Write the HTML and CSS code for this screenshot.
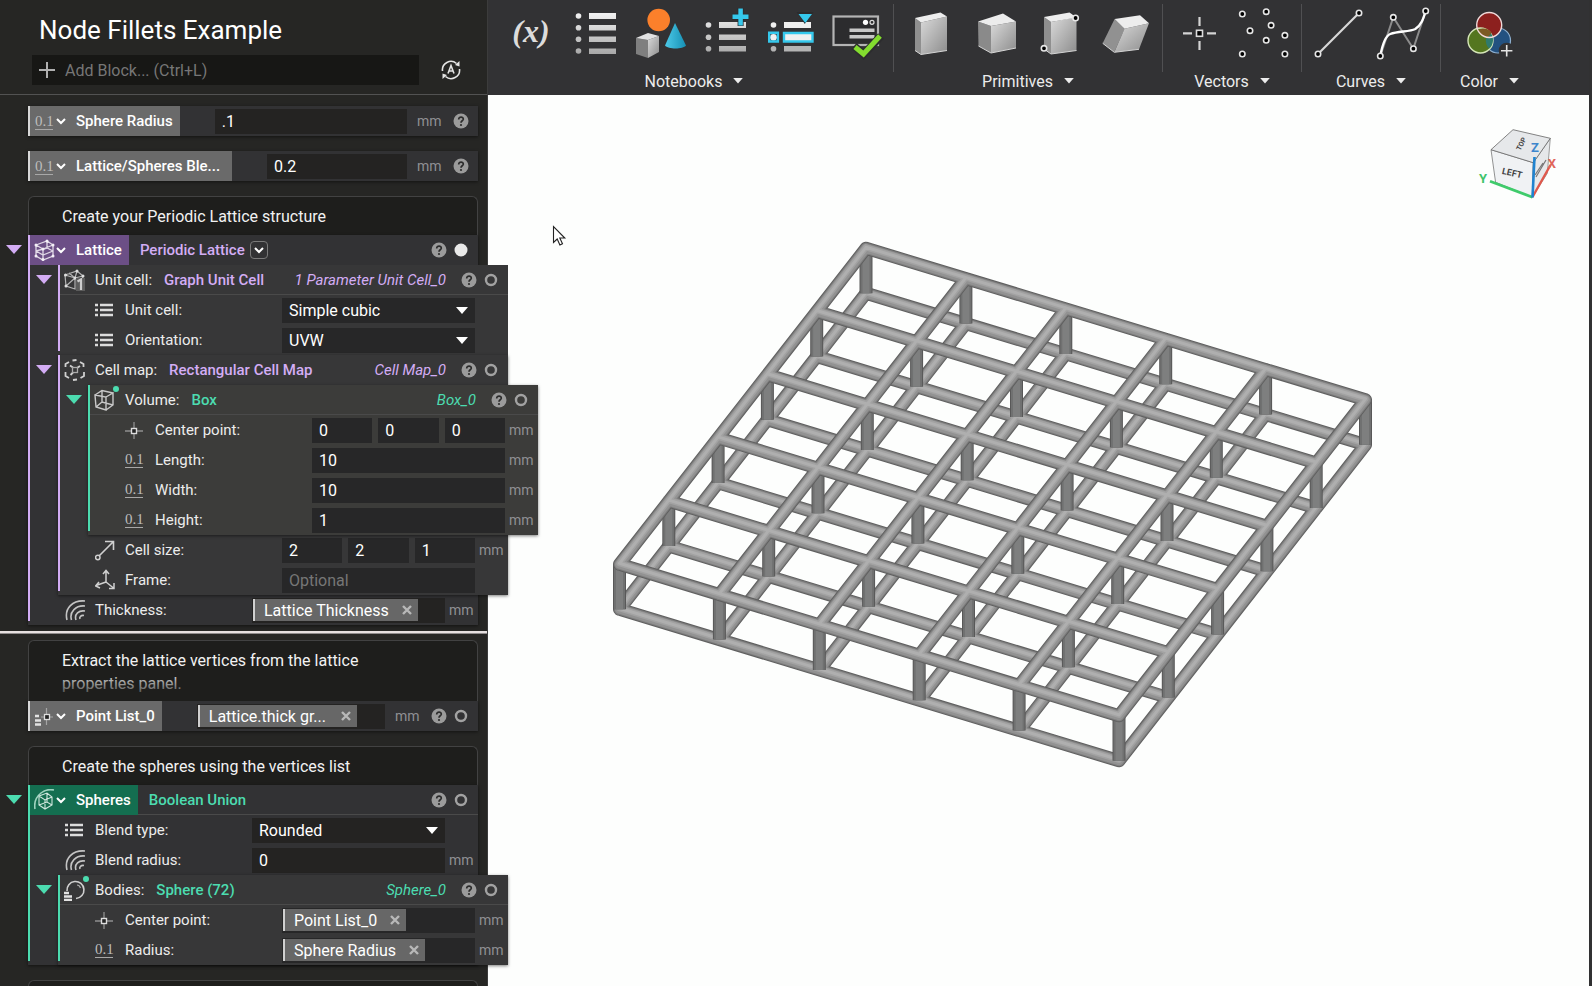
FILE: index.html
```html
<!DOCTYPE html>
<html lang="en">
<head>
    <meta charset="UTF-8">
    <meta name="viewport" content="width=device-width, initial-scale=1.0">
    <title>Node Fillets Example</title>
    <link rel="stylesheet" href="styles.css">
</head>
<body>
    <svg class="sprite" aria-hidden="true">
        <symbol id="chevron" viewBox="0 0 10 10"><path d="M1 3l4 4 4-4" fill="none" stroke="currentColor" stroke-width="2"/></symbol>
        <symbol id="down" viewBox="0 0 16 10"><path d="M0 0h16L8 9z" fill="currentColor"/></symbol>
        <symbol id="close" viewBox="0 0 10 10"><path d="M1 1l8 8M9 1L1 9" stroke="currentColor" stroke-width="2.4"/></symbol>
        <symbol id="help" viewBox="0 0 16 16">
            <circle cx="8" cy="8" r="7.5" fill="#9b9b9b"/>
            <path d="M5.7 6.4c0-3.2 4.8-3 4.6-.2C10.2 7.8 8 7.8 8 9.7" fill="none" stroke="#2c2c2c" stroke-width="1.7"/>
            <circle cx="8" cy="12" r="1.1" fill="#2c2c2c"/>
        </symbol>
        <symbol id="ring" viewBox="0 0 16 16"><circle cx="8" cy="8" r="5" fill="none" stroke="#a2a2a2" stroke-width="2.4"/></symbol>
        <symbol id="dot" viewBox="0 0 16 16"><circle cx="8" cy="8" r="6.5" fill="#e9e9e9"/></symbol>
        <symbol id="list" viewBox="0 0 22 22">
            <path d="M0 6h3m2 0h13M0 11h3m2 0h13M0 16h3m2 0h13" stroke="#dcdcdc" stroke-width="2.6"/>
        </symbol>
        <symbol id="point" viewBox="0 0 22 22">
            <path d="M0 12h6m6 0h6M9 3v6m0 6v5" stroke="#8f8f8f" stroke-width="1.3"/>
            <rect x="6.5" y="9.5" width="5" height="5" fill="#222" stroke="#ddd" stroke-width="1.4"/>
        </symbol>
        <symbol id="pointlist" viewBox="0 0 22 22">
            <path d="M7 12h3m5 0h4M12.500 3v6m0 6v5" stroke="#a5a5a5" stroke-width="1.2"/>
            <rect x="10.5" y="9.5" width="5" height="5" fill="#222" stroke="#ddd" stroke-width="1.3"/>
            <path d="M1 11h4M1 15.500h6M1 19.500h6" stroke="#e2e2e2" stroke-width="2.4"/>
        </symbol>
        <symbol id="offset" viewBox="0 0 22 22">
            <path d="M2 21C-1 9 8 1 20 2M6.500 21C4 13 11 6 20 7M11 21c-2-6 3-10 9-9" fill="none" stroke="#c4c4c4" stroke-width="1.6"/>
            <path d="M15 20c-1-2 1-4 4-3.500" fill="none" stroke="#c4c4c4" stroke-width="1.6"/>
        </symbol>
        <symbol id="arrow" viewBox="0 0 22 22">
            <path d="M4 17L18 3M10 2.500h8.500V11" fill="none" stroke="#d0d0d0" stroke-width="1.6"/>
            <circle cx="2.8" cy="18.5" r="2.2" fill="none" stroke="#d0d0d0" stroke-width="1.5"/>
        </symbol>
        <symbol id="frame" viewBox="0 0 22 22">
            <path d="M11 13V2M8 5l3-3.500L14 5M11 13L1 16.500M4 13l-3.500 4L5 19M11 13l7.500 6M19 14v5.500h-5" fill="none" stroke="#d0d0d0" stroke-width="1.5"/>
        </symbol>
        <symbol id="box" viewBox="0 0 22 22">
            <path d="M1 6l11 2v13L2 18zM12 8l7-4v12l-7 5M1 6l7-4.500L19 4M8 2v11M2 18l6-5 11 3" fill="none" stroke="#c8c8c8" stroke-width="1.4"/>
        </symbol>
        <symbol id="graphcell" viewBox="0 0 22 22">
            <path d="M1 6L13 2l6 5M1 6l10 3 8-2M1 6l1 11 9 3V9M2 17l9-8M5 4l6 5M11 9l2-7M19 7l-1 5" fill="none" stroke="#b4b4b4" stroke-width="1.2"/>
            <g fill="#ddd"><circle cx="1.5" cy="6" r="1.5"/><circle cx="13" cy="2" r="1.5"/><circle cx="11" cy="9" r="1.5"/><circle cx="2" cy="17" r="1.5"/><circle cx="19" cy="7" r="1.5"/></g>
            <path d="M12 9h9v13h-9z" fill="#5c5c5c"/><path d="M13.500 12.500l3.500-2V21" fill="none" stroke="#ccc" stroke-width="2.2"/>
        </symbol>
        <symbol id="cellmap" viewBox="0 0 22 22">
            <path d="M1.500 8V5L5 3M8.500 1.500l4-.5M16 3l3.500 2v3M20 13v4l-3.500 2M13 20.500l-4 .5M5 19l-3.500-2v-4M9 8.500l-3-2M13 9l3-2M9 13.500L6.500 16" fill="none" stroke="#d0d0d0" stroke-width="1.8"/>
            <rect x="8.5" y="8.500" width="5" height="5" fill="none" stroke="#aaa" stroke-width="1.3"/>
        </symbol>
        <symbol id="latticeicon" viewBox="0 0 22 22">
            <path d="M2 6l11-4 6 4v11l-10 4-7-4zM2 6l7 4 10-4M9 10v11M2 12l7 4 10-4M2 12l11-3 6 3M13 2v7" fill="none" stroke="#e0d8e6" stroke-width="1.3"/>
            <g fill="#f4f0f7"><circle cx="2" cy="6" r="1.5"/><circle cx="13" cy="2" r="1.5"/><circle cx="19" cy="6" r="1.5"/><circle cx="9" cy="10" r="1.5"/><circle cx="9" cy="20.5" r="1.5"/><circle cx="2" cy="17" r="1.5"/><circle cx="19" cy="17" r="1.5"/></g>
        </symbol>
        <symbol id="union" viewBox="0 0 22 22">
            <path d="M1 20C0 14 2 8 7 4c3-2.500 8-4 13-3" fill="none" stroke="#9fd3bf" stroke-width="1.6"/>
            <path d="M5 7l8-3 5 4v8l-7 4-6-4zM5 7l6 4 7-3M11 11v9M5 16l8-3 5 3M13 4v9" fill="none" stroke="#cfe6dd" stroke-width="1.1"/>
        </symbol>
        <symbol id="sphere" viewBox="0 0 22 22">
            <path d="M3 12A8.500 8.500 0 1 1 12 19.500" fill="none" stroke="#d0d0d0" stroke-width="1.6"/>
            <path d="M13 6c2 0 3 1.500 3.500 3" fill="none" stroke="#aaa" stroke-width="1.2"/>
            <path d="M0 14h5M0 17.500h8M0 21h8" stroke="#e2e2e2" stroke-width="2.3"/>
        </symbol>
        <linearGradient id="side" x1="0" x2="1" y1="0" y2="1"><stop offset="0" stop-color="#dadada"/><stop offset="1" stop-color="#8c8c8c"/></linearGradient>
        <linearGradient id="cone" x1="0" x2="1"><stop offset="0" stop-color="#4cc9e8"/><stop offset="1" stop-color="#1690b4"/></linearGradient>
        <linearGradient id="greys" gradientUnits="userSpaceOnUse" x1="0" y1="14" x2="0" y2="54"><stop offset="0" stop-color="#f0f0f0"/><stop offset="1" stop-color="#a8a8a8"/></linearGradient>
    </svg>

    <div class="app">
        <aside class="sidebar">
            <header class="notebook-head">
                <h1>Node Fillets Example</h1>
                <div class="add-row">
                    <label class="add-block">
                        <svg width="16" height="16" viewBox="0 0 16 16"><path d="M8 0v16M0 8h16" stroke="#b0b0b0" stroke-width="2"/></svg>
                        <input type="text" placeholder="Add Block... (Ctrl+L)" aria-label="Add Block">
                    </label>
                    <button class="icon-btn" aria-label="Auto run">
                        <svg width="20" height="20" viewBox="0 0 20 20" fill="none" stroke="#e4e4e4" stroke-width="1.6">
                            <path d="M1.500 11A8.500 8.500 0 0 1 15.500 3.500M18.500 9A8.500 8.500 0 0 1 4.500 16.500M7 13.500l3-8 3 8M8 11h4"/>
                            <path d="M14 5l4.500-4v5.500zM6 15l-4.500 4v-5.500z" fill="#e4e4e4" stroke="none"/>
                        </svg>
                    </button>
                </div>
            </header>

            <section class="pane">
                <div class="node plain">
                    <div class="head">
                        <span class="tag"><span class="num">0.1</span><svg class="chev"><use href="#chevron"/></svg><label for="sphere-radius">Sphere Radius</label></span>
                        <input class="field value" id="sphere-radius" type="text" value=".1">
                        <span class="unit">mm</span>
                        <button class="icon-btn" aria-label="Help"><svg class="ic16"><use href="#help"/></svg></button>
                    </div>
                </div>
                <div class="node plain">
                    <div class="head">
                        <span class="tag tag-long"><span class="num">0.1</span><svg class="chev"><use href="#chevron"/></svg><label for="blend">Lattice/Spheres Ble...</label></span>
                        <input class="field value" id="blend" type="text" value="0.2">
                        <span class="unit">mm</span>
                        <button class="icon-btn" aria-label="Help"><svg class="ic16"><use href="#help"/></svg></button>
                    </div>
                </div>

                <article class="block">
                    <p class="comment">Create your Periodic Lattice structure</p>
                    <div class="node purple">
                        <div class="head">
                            <button class="fold" aria-label="Collapse"><svg width="16" height="10"><use href="#down"/></svg></button>
                            <span class="tag"><svg class="ic"><use href="#latticeicon"/></svg><svg class="chev"><use href="#chevron"/></svg><span class="tag-name">Lattice</span></span>
                            <span class="type">Periodic Lattice</span>
                            <button class="overload" aria-label="Overloads"><svg class="chev"><use href="#chevron"/></svg></button>
                            <span class="ports">
                                <button class="icon-btn" aria-label="Help"><svg class="ic16"><use href="#help"/></svg></button>
                                <button class="icon-btn" aria-label="Visible"><svg class="ic16"><use href="#dot"/></svg></button>
                            </span>
                        </div>

                        <div class="node child">
                            <div class="head ruled">
                                <button class="fold" aria-label="Collapse"><svg width="16" height="10"><use href="#down"/></svg></button>
                                <svg class="ic"><use href="#graphcell"/></svg>
                                <span class="label">Unit cell:</span>
                                <span class="type">Graph Unit Cell</span>
                                <em class="instance">1 Parameter Unit Cell_0</em>
                                <span class="ports">
                                    <button class="icon-btn" aria-label="Help"><svg class="ic16"><use href="#help"/></svg></button>
                                    <button class="icon-btn" aria-label="Visible"><svg class="ic16"><use href="#ring"/></svg></button>
                                </span>
                            </div>
                            <div class="row">
                                <svg class="ic"><use href="#list"/></svg>
                                <label for="cell-type">Unit cell:</label>
                                <span class="select"><select class="field" id="cell-type"><option>Simple cubic</option></select></span>
                                <span class="unit"></span>
                            </div>
                            <div class="row">
                                <svg class="ic"><use href="#list"/></svg>
                                <label for="orient">Orientation:</label>
                                <span class="select"><select class="field" id="orient"><option>UVW</option></select></span>
                                <span class="unit"></span>
                            </div>
                        </div>

                        <div class="node child last">
                            <div class="head">
                                <button class="fold" aria-label="Collapse"><svg width="16" height="10"><use href="#down"/></svg></button>
                                <svg class="ic"><use href="#cellmap"/></svg>
                                <span class="label">Cell map:</span>
                                <span class="type">Rectangular Cell Map</span>
                                <em class="instance">Cell Map_0</em>
                                <span class="ports">
                                    <button class="icon-btn" aria-label="Help"><svg class="ic16"><use href="#help"/></svg></button>
                                    <button class="icon-btn" aria-label="Visible"><svg class="ic16"><use href="#ring"/></svg></button>
                                </span>
                            </div>

                            <div class="node child deep last green">
                                <div class="head ruled">
                                    <button class="fold" aria-label="Collapse"><svg width="16" height="10"><use href="#down"/></svg></button>
                                    <svg class="ic"><use href="#box"/></svg>
                                    <span class="badge"></span>
                                    <span class="label">Volume:</span>
                                    <span class="type">Box</span>
                                    <em class="instance">Box_0</em>
                                    <span class="ports">
                                        <button class="icon-btn" aria-label="Help"><svg class="ic16"><use href="#help"/></svg></button>
                                        <button class="icon-btn" aria-label="Visible"><svg class="ic16"><use href="#ring"/></svg></button>
                                    </span>
                                </div>
                                <div class="row">
                                    <svg class="ic"><use href="#point"/></svg>
                                    <label for="cx">Center point:</label>
                                    <span class="triple">
                                        <input class="field" id="cx" type="text" value="0">
                                        <input class="field" type="text" value="0" aria-label="Center point Y">
                                        <input class="field" type="text" value="0" aria-label="Center point Z">
                                    </span>
                                    <span class="unit">mm</span>
                                </div>
                                <div class="row">
                                    <span class="ic"><span class="num">0.1</span></span>
                                    <label for="len">Length:</label>
                                    <input class="field" id="len" type="text" value="10">
                                    <span class="unit">mm</span>
                                </div>
                                <div class="row">
                                    <span class="ic"><span class="num">0.1</span></span>
                                    <label for="wid">Width:</label>
                                    <input class="field" id="wid" type="text" value="10">
                                    <span class="unit">mm</span>
                                </div>
                                <div class="row">
                                    <span class="ic"><span class="num">0.1</span></span>
                                    <label for="hei">Height:</label>
                                    <input class="field" id="hei" type="text" value="1">
                                    <span class="unit">mm</span>
                                </div>
                            </div>

                            <div class="row">
                                <svg class="ic"><use href="#arrow"/></svg>
                                <label for="sx">Cell size:</label>
                                <span class="triple">
                                    <input class="field" id="sx" type="text" value="2">
                                    <input class="field" type="text" value="2" aria-label="Cell size Y">
                                    <input class="field" type="text" value="1" aria-label="Cell size Z">
                                </span>
                                <span class="unit">mm</span>
                            </div>
                            <div class="row">
                                <svg class="ic"><use href="#frame"/></svg>
                                <label for="frame-in">Frame:</label>
                                <input class="field" id="frame-in" type="text" placeholder="Optional">
                                <span class="unit"></span>
                            </div>
                        </div>

                        <div class="row">
                            <svg class="ic"><use href="#offset"/></svg>
                            <label for="thick">Thickness:</label>
                            <div class="field slot">
                                <span class="token">Lattice Thickness<button class="icon-btn" aria-label="Remove"><svg width="10" height="10"><use href="#close"/></svg></button></span>
                                <input id="thick" type="text">
                            </div>
                            <span class="unit">mm</span>
                        </div>
                    </div>
                </article>
            </section>

            <div class="splitter"></div>

            <section class="pane lower">
                <article class="block">
                    <p class="comment tall">Extract the lattice vertices from the lattice properties panel.</p>
                    <div class="node plain">
                        <div class="head">
                            <span class="tag"><svg class="ic"><use href="#pointlist"/></svg><svg class="chev"><use href="#chevron"/></svg><label for="points">Point List_0</label></span>
                            <div class="field slot value">
                                <span class="token token-long">Lattice.thick gr...<button class="icon-btn" aria-label="Remove"><svg width="10" height="10"><use href="#close"/></svg></button></span>
                                <input id="points" type="text">
                            </div>
                            <span class="unit">mm</span>
                            <span class="ports">
                                <button class="icon-btn" aria-label="Help"><svg class="ic16"><use href="#help"/></svg></button>
                                <button class="icon-btn" aria-label="Visible"><svg class="ic16"><use href="#ring"/></svg></button>
                            </span>
                        </div>
                    </div>
                </article>

                <article class="block">
                    <p class="comment">Create the spheres using the vertices list</p>
                    <div class="node green">
                        <div class="head ruled">
                            <button class="fold" aria-label="Collapse"><svg width="16" height="10"><use href="#down"/></svg></button>
                            <span class="tag"><svg class="ic"><use href="#union"/></svg><svg class="chev"><use href="#chevron"/></svg><span class="tag-name">Spheres</span></span>
                            <span class="type">Boolean Union</span>
                            <span class="ports">
                                <button class="icon-btn" aria-label="Help"><svg class="ic16"><use href="#help"/></svg></button>
                                <button class="icon-btn" aria-label="Visible"><svg class="ic16"><use href="#ring"/></svg></button>
                            </span>
                        </div>
                        <div class="row">
                            <svg class="ic"><use href="#list"/></svg>
                            <label for="blend-type">Blend type:</label>
                            <span class="select"><select class="field" id="blend-type"><option>Rounded</option></select></span>
                            <span class="unit"></span>
                        </div>
                        <div class="row">
                            <svg class="ic"><use href="#offset"/></svg>
                            <label for="blend-radius">Blend radius:</label>
                            <input class="field" id="blend-radius" type="text" value="0">
                            <span class="unit">mm</span>
                        </div>
                        <div class="node child last">
                            <div class="head ruled">
                                <button class="fold" aria-label="Collapse"><svg width="16" height="10"><use href="#down"/></svg></button>
                                <svg class="ic"><use href="#sphere"/></svg>
                                <span class="badge"></span>
                                <span class="label">Bodies:</span>
                                <span class="type">Sphere (72)</span>
                                <em class="instance">Sphere_0</em>
                                <span class="ports">
                                    <button class="icon-btn" aria-label="Help"><svg class="ic16"><use href="#help"/></svg></button>
                                    <button class="icon-btn" aria-label="Visible"><svg class="ic16"><use href="#ring"/></svg></button>
                                </span>
                            </div>
                            <div class="row">
                                <svg class="ic"><use href="#point"/></svg>
                                <label for="body-center">Center point:</label>
                                <div class="field slot">
                                    <span class="token">Point List_0<button class="icon-btn" aria-label="Remove"><svg width="10" height="10"><use href="#close"/></svg></button></span>
                                    <input id="body-center" type="text">
                                </div>
                                <span class="unit">mm</span>
                            </div>
                            <div class="row">
                                <span class="ic"><span class="num">0.1</span></span>
                                <label for="body-radius">Radius:</label>
                                <div class="field slot">
                                    <span class="token">Sphere Radius<button class="icon-btn" aria-label="Remove"><svg width="10" height="10"><use href="#close"/></svg></button></span>
                                    <input id="body-radius" type="text">
                                </div>
                                <span class="unit">mm</span>
                            </div>
                        </div>
                    </div>
                </article>

                <article class="block">
                    <p class="comment"></p>
                </article>
            </section>
        </aside>

        <main class="workspace">
            <nav class="toolbar">
                <div class="group wide">
                    <div class="tools">
                        <button aria-label="Variable"><svg class="tool" viewBox="0 0 65 66"><text class="fx" x="32" y="42" text-anchor="middle">(x)</text></svg></button>
                        <button aria-label="List"><svg class="tool" viewBox="0 0 65 66">
                            <g fill="url(#greys)"><circle cx="14.500" cy="16" r="2.8"/><circle cx="14.500" cy="27.700" r="2.8"/><circle cx="14.500" cy="39.300" r="2.8"/><circle cx="14.500" cy="51" r="2.8"/>
                            <path d="M25 13h27v6H25zM25 25h27v5.500H25zM25 36.500h27V42H25zM25 48.500h27V54H25z"/></g>
                        </svg></button>
                        <button aria-label="Blocks"><svg class="tool" viewBox="0 0 65 66">
                            <circle cx="29.700" cy="20" r="11.300" fill="#fb802b"/>
                            <path d="M46 23l11 22.500c-3 4-18 4-21 0z" fill="url(#cone)"/>
                            <path d="M7 38l12 2v18L7 54z" fill="#7f7f7f"/><path d="M19 40l11-4v16l-11 6z" fill="url(#side)"/><path d="M7 38l12-5 11 3-11 4z" fill="#e2e2e2"/>
                        </svg></button>
                        <button aria-label="Add to list"><svg class="tool" viewBox="0 0 65 66">
                            <g fill="url(#greys)"><circle cx="14.500" cy="25" r="2.8"/><circle cx="14.500" cy="37.300" r="2.8"/><circle cx="14.500" cy="48.700" r="2.8"/>
                            <path d="M25 22h27v6H25zM25 34.500h27V40H25zM25 46h27v5.500H25z"/></g>
                            <path d="M46.600 8v18M38 16.700h17" stroke="#2b2b2d" stroke-width="6"/>
                            <path d="M46.600 8.500v17M38.500 16.700h16" stroke="#35c8ec" stroke-width="4.5"/>
                        </svg></button>
                        <button aria-label="Filter list"><svg class="tool" viewBox="0 0 65 66">
                            <g fill="#f0f0f0"><circle cx="14.500" cy="25" r="2.8"/><circle cx="14.500" cy="37.300" r="3.4"/>
                            <path d="M25 22h27v6H25zM25 33.500h28v7.500H25z"/></g>
                            <g fill="#b4b4b4"><circle cx="14.500" cy="48.700" r="2.8"/><path d="M25 46h27v5.500H25z"/></g>
                            <path d="M10.200 32.800h8.700v8.700h-8.700zM25 33h28.500v8.500H25z" fill="none" stroke="#35c8ec" stroke-width="2.4"/>
                            <path d="M37.500 12h17l-8.700 12z" fill="#2b2b2d"/>
                            <path d="M39.500 14h13.500l-6.700 9z" fill="#35c8ec"/>
                        </svg></button>
                        <button aria-label="Custom block"><svg class="tool" viewBox="0 0 65 66">
                            <rect x="9.500" y="16.500" width="44.500" height="28.500" fill="#2c2c2e" stroke="#b4b4b4" stroke-width="2.2"/>
                            <circle cx="41.500" cy="22.300" r="2.6" fill="#fff"/><circle cx="48" cy="22.300" r="2" fill="none" stroke="#ddd" stroke-width="1.2"/>
                            <path d="M25.500 30.300h25M25.500 36.700h25" stroke="#c8c8c8" stroke-width="3.4"/>
                            <path d="M30 46l9.500 8.500L57 36" fill="none" stroke="#2c2c2e" stroke-width="8"/>
                            <path d="M31 47l8.500 7L56 36" fill="none" stroke="#83dc2f" stroke-width="5"/>
                        </svg></button>
                    </div>
                    <button class="group-name">Notebooks<svg width="10" height="6"><use href="#down"/></svg></button>
                </div>
                <div class="group">
                    <div class="tools">
                        <button aria-label="Box"><svg class="tool" viewBox="0 0 65 66">
                            <path d="M17 18l6 4.500v32l-6-4z" fill="#8f8f8f"/><path d="M23 22.500l26-6v34l-26 4z" fill="url(#side)"/><path d="M17 18l25.500-5.500 6.500 4-26 6z" fill="#ededed"/><path d="M17 50.500l6 4 26-4" fill="none" stroke="#d4d4d4"/>
                        </svg></button>
                        <button aria-label="Cube"><svg class="tool" viewBox="0 0 65 66">
                            <path d="M15 21.500l13 4.500v27l-12.500-7z" fill="#8a8a8a"/><path d="M28 26l25-4.500v26.500L28 53z" fill="url(#side)"/><path d="M15 21.500l25-8 13 8L28 26z" fill="#ececec"/><path d="M15.500 46L28 53l25-5" fill="none" stroke="#d4d4d4"/>
                        </svg></button>
                        <button aria-label="Box from corners"><svg class="tool" viewBox="0 0 65 66">
                            <path d="M16 17l7 5v32l-7-5z" fill="#8f8f8f"/><path d="M23 22l25.500-5v33.500L23 54z" fill="url(#side)"/><path d="M16 17l25.500-4.500 7 5L23 22z" fill="#ededed"/><path d="M16 49l7 5 25.500-3.500" fill="none" stroke="#d4d4d4"/>
                            <g class="pts"><circle cx="47.600" cy="18" r="2.7"/><circle cx="16" cy="48.300" r="2.7"/></g>
                        </svg></button>
                        <button aria-label="Parallelepiped"><svg class="tool" viewBox="0 0 65 66">
                            <path d="M21.600 19l10 9.700L21.300 52.300 9.700 43.300z" fill="#919191"/><path d="M31.500 28.700L56 23.300l-10 26-24.700 3z" fill="url(#side)"/><path d="M21.600 19L47 15.300l9 8-24.500 5.400z" fill="#ededed"/><path d="M9.700 43.300l11.600 9 24.700-3" fill="none" stroke="#d4d4d4"/>
                        </svg></button>
                    </div>
                    <button class="group-name">Primitives<svg width="10" height="6"><use href="#down"/></svg></button>
                </div>
                <div class="group">
                    <div class="tools">
                        <button aria-label="Point"><svg class="tool" viewBox="0 0 65 66">
                            <path d="M16 33.300h9m15 0h9M32.500 17v9m0 15v9" stroke="#d4d4d4" stroke-width="2.2"/><rect x="29.500" y="30.300" width="6" height="6" fill="#000" stroke="#ddd" stroke-width="1.6"/>
                        </svg></button>
                        <button aria-label="Points"><svg class="tool" viewBox="0 0 65 66"><g class="pts">
                            <circle cx="10.300" cy="14" r="2.7"/><circle cx="34.200" cy="11.700" r="2.7"/><circle cx="39.100" cy="25.300" r="2.7"/><circle cx="18" cy="30.700" r="2.7"/><circle cx="52.900" cy="35.300" r="2.7"/><circle cx="34.200" cy="40.300" r="2.7"/><circle cx="10.300" cy="54" r="2.7"/><circle cx="52.900" cy="54" r="2.7"/>
                        </g></svg></button>
                    </div>
                    <button class="group-name">Vectors<svg width="10" height="6"><use href="#down"/></svg></button>
                </div>
                <div class="group">
                    <div class="tools">
                        <button aria-label="Line"><svg class="tool" viewBox="0 0 65 66">
                            <path d="M12 54l41-41" stroke="#d8d8d8" stroke-width="2.2"/><g class="pts"><circle cx="12" cy="54" r="2.7"/><circle cx="53" cy="13" r="2.7"/></g>
                        </svg></button>
                        <button aria-label="Spline"><svg class="tool" viewBox="0 0 65 66">
                            <path d="M9.300 56l13-38.700 20 31.400L54.700 11" fill="none" stroke="#8c8c8c" stroke-width="2"/>
                            <path d="M9.300 56c2-11 5-20 10-22 8-3 19-2 25-5 6-4 8-10 10.400-18" fill="none" stroke="#fff" stroke-width="2.4"/>
                            <g class="pts"><circle cx="9.300" cy="56" r="2.7"/><circle cx="22.300" cy="17.300" r="2.7"/><circle cx="42.400" cy="48.700" r="2.7"/><circle cx="54.700" cy="11" r="2.7"/></g>
                        </svg></button>
                    </div>
                    <button class="group-name">Curves<svg width="10" height="6"><use href="#down"/></svg></button>
                </div>
                <div class="group color">
                    <div class="tools">
                        <button aria-label="Color"><svg class="tool" viewBox="0 0 65 66">
                            <circle cx="41" cy="40.500" r="12.500" fill="#235180" stroke="#8eb0d0" stroke-width="1.2"/>
                            <circle cx="32.200" cy="25" r="12.500" fill="#8c201e"/>
                            <circle cx="23.500" cy="40.500" r="12.500" fill="#54761f" stroke="#d5e6b8" stroke-width="1.4"/>
                            <path d="M32.200 31.500c3 2.500 4 6 3.800 9-.3 4-2 6.500-3.800 8-3-2.500-4-7-3-11 .5-2.500 1.500-4.500 3-6z" fill="#2f7a6d"/>
                            <path d="M21 30.500c4-3 10-2.500 13.500 2-1.500 2.500-2.500 4.800-5.500 5-3.500 0-6.500-3-8-7z" fill="#7c5a23"/>
                            <circle cx="32.200" cy="25" r="12.500" fill="none" stroke="#f0dada" stroke-width="1.4"/>
                            <circle cx="49.700" cy="50.700" r="8" fill="#323234"/>
                            <path d="M49.700 45v11.400M44 50.700h11.400" stroke="#e4e4e4" stroke-width="1.6"/>
                        </svg></button>
                    </div>
                    <button class="group-name">Color<svg width="10" height="6"><use href="#down"/></svg></button>
                </div>
            </nav>

            <div class="viewport">
                <svg class="scene" viewBox="0 0 1101 891" preserveAspectRatio="xMinYMin meet">
                    <defs>
                        <!-- one deck: 6 x 6 rails -->
                        <path id="deck" d="M378 153.300l499.500 151.500M328.700 216.500l499.500 151.500M279.400 279.700l499.500 151.500M230.100 342.900l499.500 151.500M180.800 406.100l499.500 151.500M131.500 469.300l499.500 151.500M378 153.300l-246.500 316M477.900 183.600l-246.500 316M577.800 213.900l-246.500 316M677.700 244.200l-246.500 316M777.600 274.500l-246.500 316M877.500 304.800l-246.500 316"/>
                        <path id="posts-row" d="M0 0v45M99.900 30.300v45M199.800 60.600v45M299.700 90.900v45M399.600 121.200v45M499.500 151.500v45"/>
                        <g id="posts">
                            <use href="#posts-row" x="378" y="153.300"/>
                            <use href="#posts-row" x="328.700" y="216.500"/>
                            <use href="#posts-row" x="279.400" y="279.700"/>
                            <use href="#posts-row" x="230.100" y="342.900"/>
                            <use href="#posts-row" x="180.800" y="406.100"/>
                            <use href="#posts-row" x="131.500" y="469.300"/>
                        </g>
                        <g id="shaded-deck">
                            <use href="#deck" class="t1"/>
                            <use href="#deck" class="t2"/>
                            <use href="#deck" class="t3"/>
                            <use href="#deck" class="t4" y="-1"/>
                            <use href="#deck" class="t5" y="-1"/>
                        </g>
                    </defs>
                    <use href="#shaded-deck" y="45"/>
                    <g class="posts">
                        <use href="#posts" class="p1"/>
                        <use href="#posts" class="p2"/>
                        <use href="#posts" class="p3"/>
                    </g>
                    <use href="#shaded-deck"/>
                    <path d="M65.500 131.500v16l3.700-3.500 2.700 6 2.600-1.200-2.700-5.800h5z" fill="#fff" stroke="#222" stroke-width="1.1"/>
                </svg>
                <svg class="viewcube" width="90" height="90" viewBox="0 0 90 90">
                    <path d="M14 34.700l42.300 13-1 34.600L18.600 67.300z" fill="#f0f2f4" stroke="#777" stroke-width=".8"/>
                    <path d="M56.300 47.700l17-24.400-3 35-15 24z" fill="#e6e8ea" stroke="#888" stroke-width=".8"/>
                    <path d="M36 14.700l37.300 8.600-17 24.400-42.300-13z" fill="#e6e8ea" stroke="#666" stroke-width=".8"/>
                    <path d="M59 62l10-17M58 60l8-12" stroke="#777" stroke-width="1.2"/>
                    <text class="face" text-anchor="middle" transform="translate(34.500 61) rotate(13)">LEFT</text>
                    <text class="face top" text-anchor="middle" transform="translate(46.500 30) rotate(-62)">TOP</text>
                    <path d="M13 66.300l42.500 16" stroke="#3fcb6b" stroke-width="2.8"/>
                    <path d="M55.500 82l18-32" stroke="#e0584c" stroke-width="2.4"/>
                    <path d="M55.500 82.500L57.500 42" stroke="#1f83d0" stroke-width="2.6"/>
                    <g class="axis" text-anchor="middle"><text x="6" y="68" fill="#3fc46b">Y</text><text x="58" y="37" fill="#3d86cc">Z</text><text x="75" y="53" fill="#e0655a">X</text></g>
                </svg>
            </div>
        </main>
    </div>
</body>
</html>
```
FILE: styles.css
```css
*{
    margin: 0;
    padding: 0;
    box-sizing: border-box;
}
body{
    font-family: Roboto, "Liberation Sans", sans-serif;
    font-size: 15px;
    color: #ececec;
    background-color: #262624;
}
button, input, select{
    font: inherit;
    color: inherit;
    background: none;
    border: 0;
    outline: 0;
}
svg{
    display: block;
    flex-shrink: 0;
}
.sprite{
    position: absolute;
    width: 0;
    height: 0;
}
.app{
    display: flex;
    height: 100vh;
    overflow: hidden;
}

/* sidebar */
.sidebar{
    flex: 0 0 488px;
    min-width: 0;
    position: relative;
    z-index: 1;
    background-color: #262624;
    border-right: 1px solid #3c3c3c;
}
.notebook-head{
    padding: 15px 26px 9px 32px;
    border-bottom: 1px solid #525252;
}
h1{
    padding-left: 7px;
    font-size: 26px;
    font-weight: 400;
    line-height: 30px;
    color: #fff;
}
.add-row{
    display: flex;
    align-items: center;
    gap: 22px;
    margin-top: 10px;
}
.add-block{
    flex: 1;
    display: flex;
    align-items: center;
    gap: 10px;
    height: 30px;
    padding-left: 7px;
    background-color: #171715;
}
.add-block input{
    flex: 1;
    min-width: 0;
    font-size: 16px;
}
::placeholder{
    color: #767676;
    opacity: 1;
}
.icon-btn{
    display: block;
    flex-shrink: 0;
}
.ic16{
    width: 16px;
    height: 16px;
}
.pane{
    display: flex;
    flex-direction: column;
    gap: 15px;
    padding: 11px 9px 6px 28px;
}
.lower{
    padding-top: 6px;
}
.splitter{
    height: 3px;
    background-color: #908c8c;
    border-top: 2px solid #e6e0e0;
}
.comment{
    min-height: 39px;
    padding: 8px 60px 0 33px;
    font-size: 16px;
    line-height: 23px;
    color: #f2f2f2;
    background-color: #1e1e1c;
    border: 1px solid #424242;
    border-bottom: 0;
    border-radius: 6px 6px 0 0;
}
/* second line fades out */
.tall{
    position: relative;
    height: 61px;
}
.tall::after{
    content: "";
    position: absolute;
    left: 0;
    right: 0;
    bottom: 0;
    height: 30px;
    background: linear-gradient(rgba(30, 30, 28, 0), #1e1e1c);
}

/* nodes */
.node{
    --accent: #d8d8d8;
    --tag: #6a6a6a;
    --field: #242322;
    padding-left: 2px;
    background: linear-gradient(var(--accent), var(--accent)) 0 0 / 2px calc(100% - 4px) no-repeat #323234;
    box-shadow: 0 1px 3px rgba(0, 0, 0, .5);
}
.plain{
    background-size: 2px 100%;
}
.purple{
    --accent: #d3adf5;
    --tag: #6c4f86;
}
.green{
    --accent: #4cdcb0;
    --tag: #146e50;
}
.child{
    position: relative;
    margin: 0 -30px 0 28px;
    --field: #272728;
    background-color: #373738;
}
.purple > .child:not(.green){
    --accent: #d3adf5;
}
.green > .child{
    --accent: #4cdcb0;
}
.child:not(.last){
    box-shadow: none;
}
.deep{
    background-color: #3c3c3a;
}
.head{
    position: relative;
    display: flex;
    align-items: center;
    height: 30px;
    padding-right: 9px;
}
.child > .head{
    padding-left: 4px;
}
.ruled{
    border-bottom: 1px solid #4a4a4a;
}
.fold{
    position: absolute;
    left: -24px;
    top: 10px;
    color: var(--accent);
}
.badge{
    position: absolute;
    left: 23px;
    top: 1px;
    width: 6px;
    height: 6px;
    border-radius: 50%;
    background-color: var(--accent);
}
.tag{
    flex-shrink: 0;
    display: flex;
    align-items: center;
    height: 30px;
    padding: 0 7px 0 4px;
    font-weight: 500;
    color: #fff;
    background-color: var(--tag);
}
.tag-long{
    width: 202px;
}
.tag .num{
    margin: 0 3px 0 1px;
}
.tag .ic{
    margin-right: 0;
}
.chev{
    width: 10px;
    height: 10px;
    color: #fff;
}
.tag .chev{
    margin-right: 10px;
}
.num{
    display: block;
    width: 18px;
    font: 15px/16px "Liberation Serif", serif;
    text-align: center;
    color: #bdbdbd;
    border-bottom: 1px solid #a8a8a8;
}
.ic{
    flex-shrink: 0;
    width: 22px;
    height: 22px;
    margin-right: 8px;
}
.ic .num{
    margin-top: 2px;
}
.head > .ic{
    margin-right: 9px;
}
.type{
    margin-left: 11px;
    font-weight: 500;
    color: var(--accent);
}
.label + .type{
    margin-left: 12px;
}
.overload{
    width: 18px;
    height: 18px;
    padding: 3px;
    margin-left: 5px;
    border: 1px solid #7a7a7a;
    border-radius: 4px;
}
.instance{
    margin-left: auto;
    color: var(--accent);
}
.ports{
    display: flex;
    gap: 6px;
    margin-left: auto;
}
.instance + .ports{
    margin-left: 15px;
}
.unit{
    width: 33px;
    padding-left: 4px;
    font-size: 14px;
    color: #8f8f93;
}
.head > .unit{
    flex-shrink: 0;
    width: 24px;
    padding: 0;
    margin: 0 12px 0 10px;
}
.row{
    display: flex;
    align-items: center;
    height: 30px;
    padding-left: 35px;
}
.row label{
    flex: 1;
}
.field{
    width: 193px;
    height: 25px;
    padding: 0 7px;
    font-size: 16px;
    color: #fff;
    background-color: var(--field);
}
.value{
    flex: 1;
    width: 0;
    min-width: 0;
    margin-left: 35px;
}
.triple{
    display: grid;
    grid-template-columns: repeat(3, 1fr);
    gap: 6px;
    width: 193px;
}
.triple .field{
    width: auto;
    min-width: 0;
}
.select{
    position: relative;
}
.select select{
    display: block;
    appearance: none;
}
.select::after{
    content: "";
    position: absolute;
    right: 7px;
    top: 9px;
    border: 6px solid transparent;
    border-top: 7px solid #fff;
    border-bottom: 0;
    pointer-events: none;
}
.slot{
    display: flex;
    align-items: center;
    padding: 0 0 0 1px;
}
.slot input{
    flex: 1;
    width: 0;
    min-width: 0;
}
.token{
    flex-shrink: 0;
    display: flex;
    align-items: center;
    justify-content: space-between;
    gap: 13px;
    height: 22px;
    padding: 0 6px 0 9px;
    background-color: #676767;
    border-left: 2px solid #d0d0d0;
    white-space: nowrap;
}
.token-long{
    width: 159px;
}
.token button{
    color: #b8b8b8;
}

/* toolbar */
.workspace{
    flex: 1;
    min-width: 0;
    display: flex;
    flex-direction: column;
    border-right: 3px solid #313132;
}
.toolbar{
    display: flex;
    height: 95px;
    background-color: #323234;
}
.group{
    position: relative;
    display: flex;
    flex-direction: column;
    align-items: center;
    padding: 0 4px;
    border-right: 1px solid transparent;
    border-image: linear-gradient(transparent 5px, #505052 5px, #505052 71px, transparent 71px) 1;
}
.wide{
    padding: 0 4px 0 11px;
}
.color{
    padding: 0 16px;
    border: 0;
}
.tools{
    display: flex;
}
.tool{
    width: 65px;
    height: 66px;
}
.fx{
    font: italic bold 32px "Liberation Serif", serif;
    fill: #dcdcdc;
}
.pts{
    fill: #000;
    stroke: #e6e6e6;
    stroke-width: 1.6;
}
.group-name{
    display: flex;
    align-items: center;
    gap: 11px;
    margin-top: 1px;
    height: 32px;
    font-size: 16px;
}

/* 3d view */
.viewport{
    position: relative;
    flex: 1;
    min-height: 0;
    overflow: hidden;
    background-color: #fdfefd;
}
.scene{
    width: 100%;
    height: 100%;
    fill: none;
    stroke-linecap: round;
}
.posts{
    stroke-linecap: butt;
}
.t1{
    stroke: #606060;
    stroke-width: 13px;
}
.t2{
    stroke: #7e7e7e;
    stroke-width: 11px;
}
.t3{
    stroke: #929292;
    stroke-width: 9px;
}
.t4{
    stroke: #a2a2a2;
    stroke-width: 6px;
}
.t5{
    stroke: #afafaf;
    stroke-width: 3px;
}
.p1{
    stroke: #585858;
    stroke-width: 13px;
}
.p2{
    stroke: #707171;
    stroke-width: 11px;
}
.p3{
    stroke: #7e7f7f;
    stroke-width: 7px;
}
.viewcube{
    position: absolute;
    top: 20px;
    right: 22px;
}
.face{
    font: bold 9px Roboto, sans-serif;
    fill: #444;
}
.top{
    font-size: 7px;
}
.axis{
    font: bold 13px Roboto, sans-serif;
}
```
